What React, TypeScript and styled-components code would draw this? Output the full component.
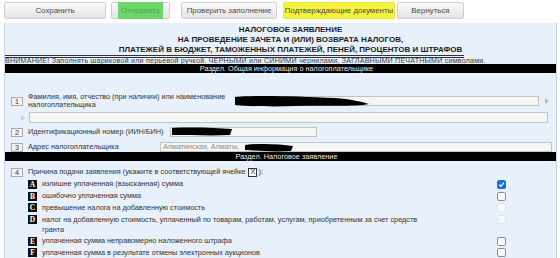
import React from "react";
import styled, { createGlobalStyle } from "styled-components";

const GlobalStyle = createGlobalStyle`
  html, body { margin: 0; padding: 0; background: #ffffff; }
  body {
    font-family: "Liberation Sans", Arial, sans-serif;
    font-size: 7.3px;
    color: #2a2a2a;
    width: 560px;
    height: 258px;
    overflow: hidden;
  }
`;

const Toolbar = styled.div`
  display: flex;
  align-items: center;
  height: 21px;
  padding: 0 0 0 4px;
`;

const Button = styled.div<{ $w: number; $ml?: number; $tone?: "plain" | "yellow" }>`
  box-sizing: border-box;
  width: ${(p) => p.$w}px;
  margin-left: ${(p) => p.$ml ?? 0}px;
  height: 17px;
  display: flex;
  align-items: center;
  justify-content: center;
  border: 1px solid ${(p) => (p.$tone === "yellow" ? "#e8e83a" : "#cfcfcf")};
  border-radius: 2px;
  background: ${(p) =>
    p.$tone === "yellow" ? "#f4f43c" : "linear-gradient(#fbfbfb, #e4e4e4)"};
  color: #4a4a4a;
  font-size: 7.9px;
`;

const GreenMark = styled.span`
  display: flex;
  align-items: center;
  height: 17px;
  padding: 0 3px;
  background: #6fd46a;
  color: #3fae3f;
`;

const Panel = styled.div`
  box-sizing: border-box;
  margin: 2px 3px 0 4px;
  width: 553px;
  height: 235px;
  background: #e7f0fb;
  border-left: 1px solid #cad7e6;
  border-right: 1px solid #c3d0df;
`;

const Title = styled.div`
  padding: 2px 0 0 20px;
  height: 30px;
  text-align: center;
  font-weight: bold;
  font-size: 8px;
  line-height: 10px;
  color: #1c1c1c;
  white-space: nowrap;
`;

const Rule = styled.div`
  width: 459px;
  height: 0;
  border-top: 3px double #333;
`;

const Notice = styled.div`
  height: 6px;
  line-height: 7px;
  white-space: nowrap;
  color: #3a3a3a;
  font-size: 7.1px;
  letter-spacing: 0.22px;
`;

const SectionBar = styled.div<{ $mb: number }>`
  height: 9px;
  line-height: 9px;
  background: #000;
  color: #ececec;
  text-align: center;
  padding-left: 12px;
  margin-bottom: ${(p) => p.$mb}px;
  font-size: 7.3px;
  white-space: nowrap;
`;

const Row = styled.div<{ $h: number; $mt?: number }>`
  display: flex;
  align-items: center;
  height: ${(p) => p.$h}px;
  margin-top: ${(p) => p.$mt ?? 0}px;
  padding-left: 6px;
`;

const NumBox = styled.span`
  box-sizing: border-box;
  flex: none;
  width: 12px;
  height: 9px;
  display: flex;
  align-items: center;
  justify-content: center;
  border: 1px solid #a9a9a9;
  background: #f3f3f3;
  color: #333;
  font-size: 7.2px;
`;

const Label = styled.span<{ $w?: number; $wrap?: boolean }>`
  margin-left: 5px;
  line-height: 8.5px;
  color: #333;
  white-space: ${(p) => (p.$wrap ? "normal" : "nowrap")};
  ${(p) => (p.$w ? `width: ${p.$w}px; flex: none;` : "")}
`;

const Field = styled.div<{ $w: number; $ml: number; $h?: number }>`
  position: relative;
  box-sizing: border-box;
  flex: none;
  width: ${(p) => p.$w}px;
  height: ${(p) => p.$h ?? 10}px;
  margin-left: ${(p) => p.$ml}px;
  border: 1px solid #c2c2c2;
  background: #f6f6f4;
  color: #8a8a8a;
  font-size: 7.2px;
  line-height: 8px;
  padding-left: 2px;
  white-space: nowrap;
`;

const Arrow = styled.span<{ $ml: number; $c: string }>`
  margin-left: ${(p) => p.$ml}px;
  width: 0;
  height: 0;
  border-top: 3px solid transparent;
  border-bottom: 3px solid transparent;
  border-left: 4px solid ${(p) => p.$c};
`;

const Redaction = styled.svg<{ $l: number; $t: number }>`
  position: absolute;
  left: ${(p) => p.$l}px;
  top: ${(p) => p.$t}px;
  overflow: visible;
`;

const XBox = styled.span`
  display: inline-flex;
  box-sizing: border-box;
  width: 9px;
  height: 9px;
  align-items: center;
  justify-content: center;
  border: 1px solid #333;
  margin: 0 1px 0 3px;
  font-size: 7.3px;
  background: #fff;
  vertical-align: middle;
`;

const Options = styled.div`
  display: grid;
  grid-template-columns: 10px 388px 1fr;
  column-gap: 4px;
  padding-left: 23px;
`;

const Letter = styled.span<{ $h: number }>`
  box-sizing: border-box;
  width: 9px;
  height: 9px;
  margin-top: ${(p) => (p.$h > 13 ? 2 : (p.$h - 9) / 2)}px;
  display: flex;
  align-items: center;
  justify-content: center;
  background: #111;
  color: #fff;
  font-family: "Liberation Serif", "Times New Roman", serif;
  font-weight: bold;
  font-size: 7.5px;
`;

const OptionText = styled.span<{ $h: number }>`
  box-sizing: border-box;
  height: ${(p) => p.$h}px;
  padding-top: ${(p) => (p.$h > 13 ? 2 : 0)}px;
  line-height: ${(p) => (p.$h > 13 ? 9.5 : p.$h)}px;
  color: #333;
`;

const CheckCell = styled.div<{ $h: number }>`
  height: ${(p) => p.$h}px;
  padding-left: 63px;
  display: flex;
  align-items: ${(p) => (p.$h > 13 ? "flex-start" : "center")};
  padding-top: ${(p) => (p.$h > 13 ? 2 : 0)}px;
  box-sizing: border-box;
`;

const Check = styled.span<{ $state: "on" | "off" | "dim" }>`
  box-sizing: border-box;
  width: 9px;
  height: 9px;
  border-radius: 2px;
  display: flex;
  align-items: center;
  justify-content: center;
  background: ${(p) => (p.$state === "on" ? "#1b6fe0" : "#ffffff")};
  border: 1px solid
    ${(p) => (p.$state === "on" ? "#1b6fe0" : p.$state === "dim" ? "#dfe3e8" : "#8f8f8f")};
  opacity: ${(p) => (p.$state === "dim" ? 0.7 : 1)};
`;

const options: { l: string; t: string; h: number; s: "on" | "off" | "dim" }[] = [
  { l: "A", t: "излишне уплаченная (взысканная) сумма", h: 12, s: "on" },
  { l: "B", t: "ошибочно уплаченная сумма", h: 12, s: "off" },
  { l: "C", t: "превышение налога на добавленную стоимость", h: 11, s: "dim" },
  {
    l: "D",
    t: "налог на добавленную стоимость, уплаченный по товарам, работам, услугам, приобретенным за счет средств гранта",
    h: 22,
    s: "dim",
  },
  { l: "E", t: "уплаченная сумма неправомерно наложенного штрафа", h: 12, s: "off" },
  { l: "F", t: "уплаченная сумма в результате отмены электронных аукционов", h: 11, s: "off" },
];

export default function App() {
  return (
    <>
      <GlobalStyle />
      <Toolbar>
        <Button $w={102}>Сохранить</Button>
        <Button $w={59} $ml={5}>
          <GreenMark>Отправить</GreenMark>
        </Button>
        <Button $w={96} $ml={11}>Проверить заполнение</Button>
        <Button $w={112} $ml={6} $tone="yellow">Подтверждающие документы</Button>
        <Button $w={67} $ml={2}>Вернуться</Button>
      </Toolbar>
      <Panel>
        <Title>
          НАЛОГОВОЕ ЗАЯВЛЕНИЕ
          <br />
          НА ПРОВЕДЕНИЕ ЗАЧЕТА И (ИЛИ) ВОЗВРАТА НАЛОГОВ,
          <br />
          ПЛАТЕЖЕЙ В БЮДЖЕТ, ТАМОЖЕННЫХ ПЛАТЕЖЕЙ, ПЕНЕЙ, ПРОЦЕНТОВ И ШТРАФОВ
        </Title>
        <Rule />
        <Notice>
          ВНИМАНИЕ! Заполнять шариковой или перьевой ручкой. ЧЕРНЫМИ или СИНИМИ чернилами, ЗАГЛАВНЫМИ
          ПЕЧАТНЫМИ символами.
        </Notice>
        <SectionBar $mb={20}>Раздел. Общая информация о налогоплательщике</SectionBar>

        <Row $h={16}>
          <NumBox>1</NumBox>
          <Label $w={205} $wrap>
            Фамилия, имя, отчество (при наличии) или наименование налогоплательщика
          </Label>
          <Field $w={303} $ml={3}>
            <Redaction $l={-2} $t={-3} width="136" height="14" viewBox="0 0 136 14">
              <path
                d="M0 3 C20 1 60 2 100 4 C115 5 128 8 134 10 C120 13 90 11 60 12 C35 13 12 12 0 11 Z"
                fill="#000"
              />
            </Redaction>
          </Field>
          <Arrow $ml={6} $c="#b8b8b8" />
        </Row>
        <Row $h={13} $mt={2}>
          <Arrow $ml={10} $c="#c9d0d8" />
          <Field $w={519} $ml={4} $h={11} />
        </Row>
        <Row $h={10} $mt={3}>
          <NumBox>2</NumBox>
          <Label $w={142}>Идентификационный номер (ИИН/БИН)</Label>
          <Field $w={147} $ml={0}>
            <Redaction $l={1} $t={-1} width="60" height="9" viewBox="0 0 60 9">
              <path d="M0 1 C20 0 45 1 60 2 L58 8 C40 9 18 8 0 8 Z" fill="#000" />
            </Redaction>
          </Field>
        </Row>
        <Row $h={10} $mt={5}>
          <NumBox>3</NumBox>
          <Label $w={132}>Адрес налогоплательщика</Label>
          <Field $w={392} $ml={0}>
            Алматинская, Алматы,
            <Redaction $l={84} $t={0} width="48" height="9" viewBox="0 0 48 9">
              <path d="M0 2 C15 0 35 1 48 3 L46 8 C30 9 14 8 0 7 Z" fill="#000" />
            </Redaction>
          </Field>
        </Row>
        <SectionBar $mb={5}>Раздел. Налоговое заявление</SectionBar>
        <Row $h={12}>
          <NumBox>4</NumBox>
          <Label>
            Причина подачи заявления (укажите в соответствующей ячейке
            <XBox>X</XBox>):
          </Label>
        </Row>
        <Options>
          {options.map((o) => (
            <React.Fragment key={o.l}>
              <Letter $h={o.h}>{o.l}</Letter>
              <OptionText $h={o.h}>{o.t}</OptionText>
              <CheckCell $h={o.h}>
                <Check $state={o.s}>
                  {o.s === "on" && (
                    <svg width="7" height="7" viewBox="0 0 10 10">
                      <path d="M1.5 5.2 L4 7.6 L8.6 2.2" fill="none" stroke="#fff" strokeWidth="1.8" />
                    </svg>
                  )}
                </Check>
              </CheckCell>
            </React.Fragment>
          ))}
        </Options>
      </Panel>
    </>
  );
}
